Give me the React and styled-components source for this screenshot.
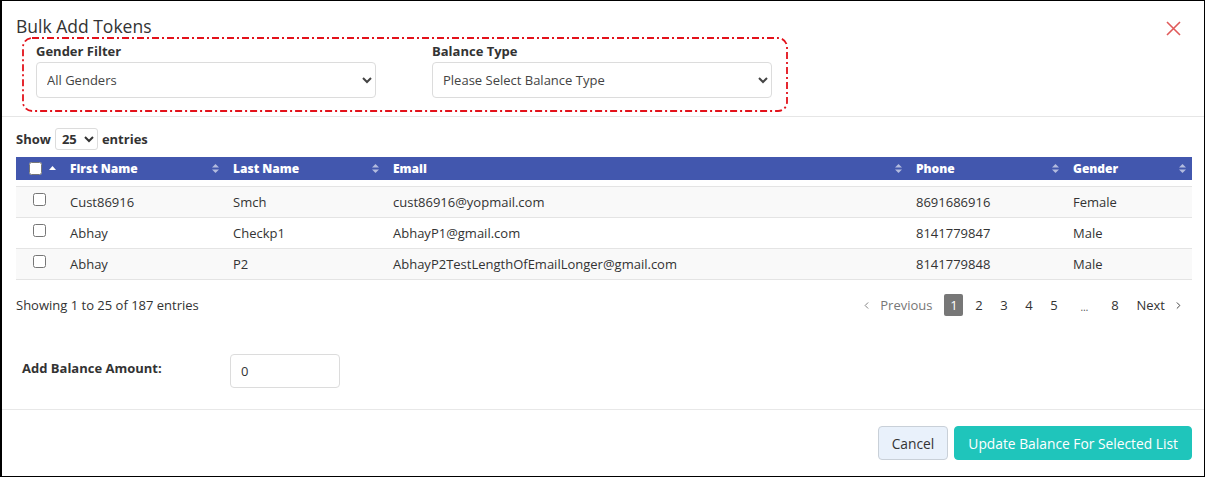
import React from "react";
import styled, { createGlobalStyle } from "styled-components";
import { ChevronLeft, ChevronRight } from "lucide-react";

const FONT = `"Open Sans", "Liberation Sans", Arial, sans-serif`;

const GlobalStyle = createGlobalStyle`
  html, body {
    margin: 0;
    padding: 0;
    background: #fff;
  }
  body {
    font-family: ${FONT};
    color: #333;
  }
  * { box-sizing: border-box; }
`;

const Modal = styled.div`
  width: 1205px;
  height: 477px;
  border: 1px solid #000;
  border-left-width: 2px;
  background: #fff;
  display: flex;
  flex-direction: column;
`;

const Header = styled.div`
  padding: 14px 15px 4px 14px;
  border-bottom: 1px solid #e6e6e6;
`;

const TitleRow = styled.div`
  display: flex;
  justify-content: space-between;
  align-items: flex-start;
`;

const Title = styled.h4`
  margin: 0;
  font-size: 17.5px;
  line-height: 22px;
  font-weight: 400;
  color: #333;
`;

const Close = styled.button`
  border: 0;
  background: none;
  padding: 0;
  margin: 6px 8px 0 0;
  width: 15px;
  height: 15px;
  cursor: pointer;
  display: flex;
`;

const FilterBox = styled.div`
  position: relative;
  margin-left: 6px;
  width: 766px;
  height: 75px;
  padding: 6px 14px 0 14px;
  display: grid;
  grid-template-columns: 340px 340px;
  column-gap: 56px;
`;

const DashFrame = styled.svg`
  position: absolute;
  inset: 0;
  pointer-events: none;
`;

const Field = styled.div`
  display: flex;
  flex-direction: column;
`;

const Label = styled.label`
  font-size: 13px;
  line-height: 16px;
  font-weight: 700;
  color: #333;
  margin-bottom: 3px;
`;

const Select = styled.select`
  height: 36px;
  width: 100%;
  border: 1px solid #dcdcdc;
  border-radius: 4px;
  background: #fff;
  padding: 0 6px;
  font-family: ${FONT};
  font-size: 13px;
  color: #444;
`;

const Body = styled.div`
  padding: 11px 12px 0 14px;
`;

const LengthRow = styled.div`
  display: flex;
  align-items: center;
  gap: 4px;
  height: 22px;
  font-size: 13px;
  font-weight: 700;
  color: #333;
`;

const SmallSelect = styled.select`
  height: 22px;
  width: 43px;
  border: 1px solid #dcdcdc;
  border-radius: 3px;
  background: #fff;
  font-family: ${FONT};
  font-size: 13px;
  font-weight: 700;
  color: #333;
  padding: 0 2px;
`;

const Table = styled.table`
  width: 1176px;
  table-layout: fixed;
  border-collapse: collapse;
  margin-top: ${(p) => p.$gap || 0}px;
  ${(p) => p.$body && "border-top: 1px solid #e4e4e4;"}
`;

const HeadRow = styled.tr`
  background: #4257ae;
`;

const Th = styled.th`
  position: relative;
  height: 23px;
  padding: 0 8px;
  text-align: left;
  font-size: 12px;
  font-weight: 800;
  color: #fff;
  white-space: nowrap;
`;

const SortMark = styled.svg`
  position: absolute;
  right: 6px;
  top: 7px;
`;

const Row = styled.tr`
  background: ${(p) => (p.$striped ? "#f9f9f9" : "#fff")};
  border-bottom: 1px solid #e4e4e4;
`;

const Td = styled.td`
  height: 31px;
  padding: 0 8px;
  font-size: 13px;
  color: #333;
  white-space: nowrap;
  vertical-align: middle;
`;

const CheckCell = styled(Td)`
  padding: 0 0 0 14px;
  vertical-align: top;
  padding-top: 3px;
`;

const HeadCheck = styled.th`
  height: 23px;
  padding: 0 0 0 10px;
  text-align: left;
  position: relative;
`;

const Check = styled.input`
  width: 13px;
  height: 13px;
  margin: ${(p) => (p.$head ? "4px 0 0 3px" : "3px 0 0 3px")};
`;

const InfoRow = styled.div`
  display: flex;
  justify-content: space-between;
  align-items: center;
  margin-top: 13px;
  height: 24px;
`;

const Info = styled.div`
  font-size: 13px;
  color: #333;
`;

const Pager = styled.div`
  display: flex;
  align-items: center;
  gap: 6px;
  margin-right: 8px;
`;

const PageNav = styled.span`
  display: flex;
  align-items: center;
  gap: 8px;
  font-size: 13px;
  color: ${(p) => (p.$muted ? "#777" : "#333")};
  padding: ${(p) => (p.$next ? "0 0 0 6px" : "0 6px 0 0")};
`;

const PageBtn = styled.span`
  min-width: 19px;
  height: 22px;
  padding: 0 3px;
  display: flex;
  align-items: center;
  justify-content: center;
  font-size: 13px;
  border-radius: 2px;
  color: ${(p) => (p.$active ? "#fff" : "#333")};
  background: ${(p) => (p.$active ? "#777" : "transparent")};
`;

const Ellipsis = styled(PageBtn)`
  min-width: 30px;
  font-size: 10px;
  padding-top: 4px;
  color: #555;
`;

const AmountRow = styled.div`
  display: grid;
  grid-template-columns: 208px 110px;
  align-items: start;
  margin: 37px 0 0 6px;
`;

const AmountLabel = styled.label`
  padding-top: 6px;
  line-height: 16px;
  font-size: 13px;
  font-weight: 700;
  color: #333;
`;

const AmountInput = styled.input`
  height: 34px;
  width: 110px;
  border: 1px solid #dcdcdc;
  border-radius: 4px;
  padding: 0 10px;
  font-family: ${FONT};
  font-size: 13px;
  color: #333;
`;

const Footer = styled.div`
  margin-top: 21px;
  border-top: 1px solid #e8e8e8;
  padding: 16px 12px 0 0;
  display: flex;
  justify-content: flex-end;
  gap: 6px;
`;

const Button = styled.button`
  height: 34px;
  padding: 0 13px;
  border-radius: 4px;
  border: 1px solid ${(p) => (p.$primary ? "#1fc5bb" : "#c9d0d8")};
  background: ${(p) => (p.$primary ? "#1fc5bb" : "#e9f1fb")};
  color: ${(p) => (p.$primary ? "#fff" : "#333")};
  font-family: ${FONT};
  font-size: 13.8px;
  cursor: pointer;
`;

const SortIcon = () => (
  <SortMark width="7" height="9" viewBox="0 0 7 9">
    <path d="M3.5 0 L7 3.5 H0 Z" fill="rgba(255,255,255,0.6)" />
    <path d="M3.5 9 L7 5.5 H0 Z" fill="rgba(255,255,255,0.6)" />
  </SortMark>
);

const columns = [
  { key: "first", label: "First Name", width: 163 },
  { key: "last", label: "Last Name", width: 160 },
  { key: "email", label: "Email", width: 523 },
  { key: "phone", label: "Phone", width: 157 },
  { key: "gender", label: "Gender", width: 127 },
];

const rows = [
  { first: "Cust86916", last: "Smch", email: "cust86916@yopmail.com", phone: "8691686916", gender: "Female" },
  { first: "Abhay", last: "Checkp1", email: "AbhayP1@gmail.com", phone: "8141779847", gender: "Male" },
  { first: "Abhay", last: "P2", email: "AbhayP2TestLengthOfEmailLonger@gmail.com", phone: "8141779848", gender: "Male" },
];

const Cols = () => (
  <colgroup>
    <col style={{ width: 46 }} />
    {columns.map((c) => (
      <col key={c.key} style={{ width: c.width }} />
    ))}
  </colgroup>
);

export default function App() {
  return (
    <>
      <GlobalStyle />
      <Modal>
        <Header>
          <TitleRow>
            <Title>Bulk Add Tokens</Title>
            <Close aria-label="Close">
              <svg width="15" height="15" viewBox="0 0 15 15">
                <path d="M1 1 L14 14 M14 1 L1 14" stroke="#e05a5a" strokeWidth="1.6" />
              </svg>
            </Close>
          </TitleRow>
          <FilterBox>
            <DashFrame width="766" height="75">
              <rect
                x="1"
                y="1"
                width="764"
                height="73"
                rx="9"
                fill="none"
                stroke="#e3121b"
                strokeWidth="1.8"
                strokeDasharray="7 3 2 3"
              />
            </DashFrame>
            <Field>
              <Label>Gender Filter</Label>
              <Select defaultValue="all">
                <option value="all">All Genders</option>
                <option value="m">Male</option>
                <option value="f">Female</option>
              </Select>
            </Field>
            <Field>
              <Label>Balance Type</Label>
              <Select defaultValue="">
                <option value="">Please Select Balance Type</option>
              </Select>
            </Field>
          </FilterBox>
        </Header>

        <Body>
          <LengthRow>
            Show
            <SmallSelect defaultValue="25">
              <option>10</option>
              <option>25</option>
              <option>50</option>
            </SmallSelect>
            entries
          </LengthRow>

          <Table $gap={7}>
            <Cols />
            <thead>
              <HeadRow>
                <HeadCheck>
                  <Check type="checkbox" $head />
                  <SortMark width="7" height="4" viewBox="0 0 7 4" style={{ top: 9, right: 6 }}>
                    <path d="M3.5 0 L7 4 H0 Z" fill="#fff" />
                  </SortMark>
                </HeadCheck>
                {columns.map((c) => (
                  <Th key={c.key}>
                    {c.label}
                    <SortIcon />
                  </Th>
                ))}
              </HeadRow>
            </thead>
          </Table>

          <Table $gap={6} $body>
            <Cols />
            <tbody>
              {rows.map((r, i) => (
                <Row key={i} $striped={i % 2 === 0}>
                  <CheckCell>
                    <Check type="checkbox" />
                  </CheckCell>
                  {columns.map((c) => (
                    <Td key={c.key}>{r[c.key]}</Td>
                  ))}
                </Row>
              ))}
            </tbody>
          </Table>

          <InfoRow>
            <Info>Showing 1 to 25 of 187 entries</Info>
            <Pager>
              <PageNav $muted>
                <ChevronLeft size={11} strokeWidth={2} />
                Previous
              </PageNav>
              <PageBtn $active>1</PageBtn>
              <PageBtn>2</PageBtn>
              <PageBtn>3</PageBtn>
              <PageBtn>4</PageBtn>
              <PageBtn>5</PageBtn>
              <Ellipsis>…</Ellipsis>
              <PageBtn>8</PageBtn>
              <PageNav $next>
                Next
                <ChevronRight size={11} strokeWidth={2} />
              </PageNav>
            </Pager>
          </InfoRow>

          <AmountRow>
            <AmountLabel>Add Balance Amount:</AmountLabel>
            <AmountInput type="text" defaultValue="0" />
          </AmountRow>
        </Body>

        <Footer>
          <Button>Cancel</Button>
          <Button $primary>Update Balance For Selected List</Button>
        </Footer>
      </Modal>
    </>
  );
}
